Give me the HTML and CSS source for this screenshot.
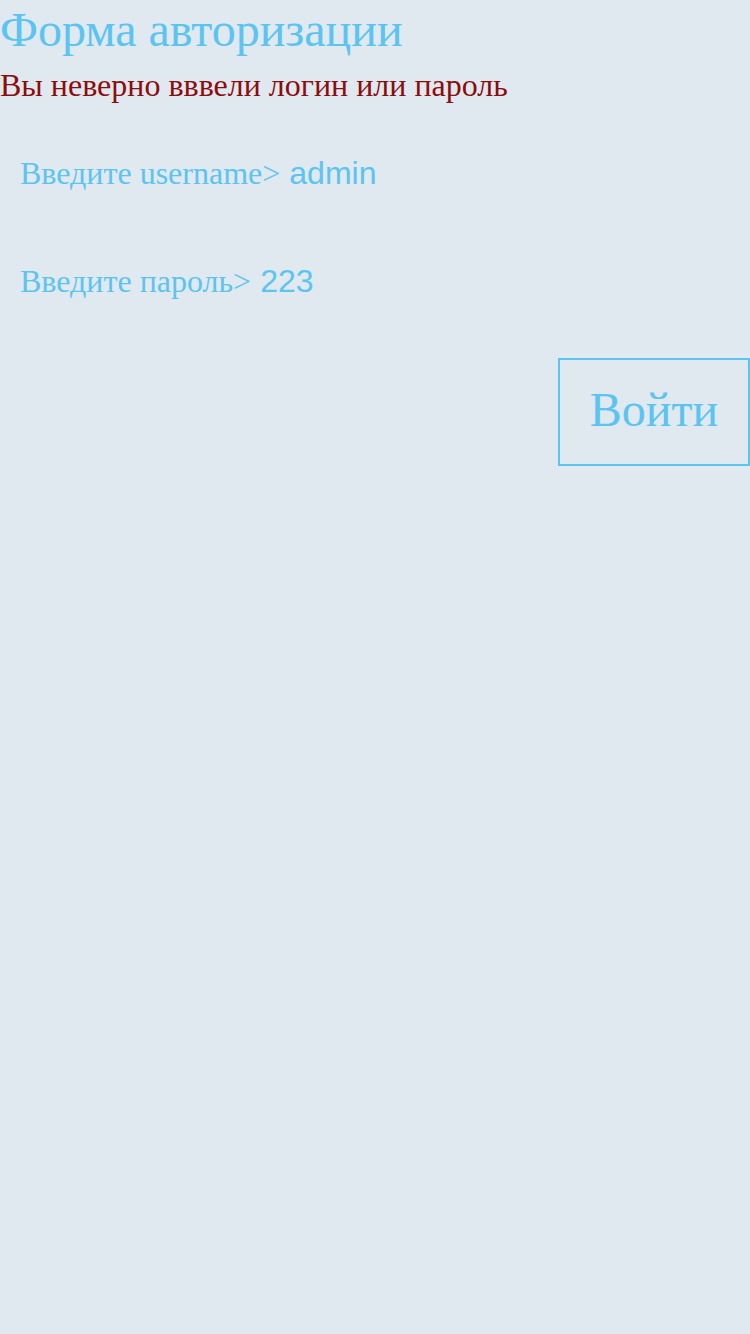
FILE: index.html
```html
<!DOCTYPE html>
<html lang="ru">
<head>
<meta charset="utf-8">
<title>Форма авторизации</title>
<link rel="stylesheet" href="styles.css">
</head>
<body>
<h1 class="title">Форма авторизации</h1>
<p class="error">Вы неверно вввели логин или пароль</p>
<form class="form">
  <div class="fields">
    <div class="row">
      <label class="label" for="u">Введите username&gt;</label>
      <input class="field" id="u" type="text" value="admin">
    </div>
    <div class="row">
      <label class="label" for="p">Введите пароль&gt;</label>
      <input class="field" id="p" type="text" value="223">
    </div>
  </div>
  <div class="actions">
    <button class="btn" type="button">Войти</button>
  </div>
</form>
</body>
</html>
```
FILE: styles.css
```css
html, body {
  margin: 0;
  padding: 0;
  background: #e0e8f0;
  font-family: "Liberation Serif", serif;
  color: #5bc4f1;
}
.title {
  margin: 0;
  padding-top: 3px;
  font-size: 48px;
  font-weight: normal;
  line-height: 53px;
  color: #5bc4f1;
}
.error {
  margin: 11px 0 0;
  font-size: 32px;
  line-height: 37px;
  color: #8b0d0d;
}
.form {
  display: flex;
  flex-direction: column;
  padding-top: 51px;
}
.fields {
  display: flex;
  flex-direction: column;
  gap: 13px;
}
.row {
  display: flex;
  align-items: baseline;
  padding-left: 20px;
  height: 95px;
}
.label {
  font-size: 32px;
  line-height: 37px;
  color: #5bc4f1;
}
.field {
  margin-left: 9px;
  border: none;
  background: transparent;
  font-family: "Liberation Sans", sans-serif;
  font-size: 32px;
  color: #5bc4f1;
  padding: 0;
  outline: none;
  width: 300px;
}
.actions {
  display: flex;
  justify-content: flex-end;
}
.btn {
  width: 192px;
  height: 108px;
  border: 2px solid #5bc4f1;
  background: transparent;
  font-family: "Liberation Serif", serif;
  font-size: 48px;
  color: #5bc4f1;
  padding: 0 0 6px;
}
```
